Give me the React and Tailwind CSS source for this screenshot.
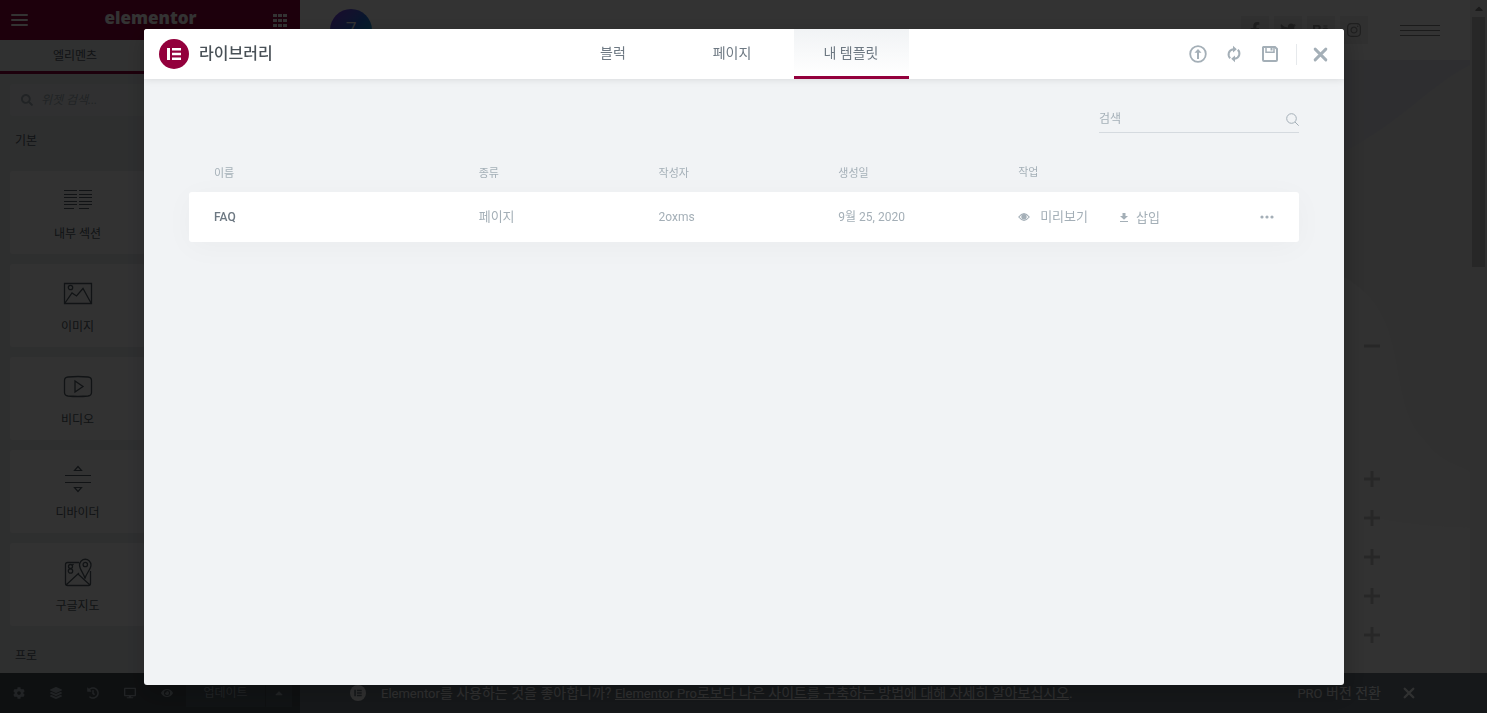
import {
  FaBehance,
  FaCaretUp,
  FaCog,
  FaDesktop,
  FaEye,
  FaFacebookF,
  FaHistory,
  FaInstagram,
  FaLayerGroup,
  FaSearch,
  FaTwitter,
} from "react-icons/fa";

const widgets = [
  { name: "내부 섹션", Icon: InnerSectionIcon },
  { name: "이미지", Icon: ImageIcon },
  { name: "비디오", Icon: VideoIcon },
  { name: "디바이더", Icon: DividerIcon },
  { name: "구글지도", Icon: MapIcon },
];

const socials = [
  { name: "Facebook", Icon: FaFacebookF },
  { name: "Twitter", Icon: FaTwitter },
  { name: "Behance", Icon: FaBehance },
  { name: "Instagram", Icon: FaInstagram },
];

const panelTools = [
  { name: "설정", Icon: FaCog },
  { name: "내비게이터", Icon: FaLayerGroup },
  { name: "히스토리", Icon: FaHistory },
  { name: "반응형 모드", Icon: FaDesktop },
  { name: "미리보기", Icon: FaEye },
];

const tabs = ["블럭", "페이지", "내 템플릿"];

const templates = [
  { title: "FAQ", type: "페이지", author: "2oxms", date: "9월 25, 2020" },
];

function InnerSectionIcon() {
  return (
    <svg width="30" height="30" fill="none" stroke="currentColor">
      <path d="M1 5.5h13M1 9.5h13M1 12.5h13M1 16.5h13M1 19.5h13M1 23.5h10M16 5.5h13M16 9.5h13M16 12.5h13M16 16.5h13M16 19.5h13M16 23.5h10" />
    </svg>
  );
}

function ImageIcon() {
  return (
    <svg width="30" height="30" fill="none" stroke="currentColor" strokeWidth="1.3">
      <path d="M1.5 5.5h27v20h-27zM2 25l7-10 4.5 3L20 10.500 28 25" />
      <circle cx="7.5" cy="9.5" r="2.2" />
    </svg>
  );
}

function VideoIcon() {
  return (
    <svg width="30" height="30" fill="none" stroke="currentColor" strokeWidth="1.3">
      <path d="M5 6q10-1 20 0 3.500.3 3.500 3.500v12q0 3-3.500 3.500-10 1-20 0-3.500-.5-3.500-3.500v-12Q1.500 6.300 5 6z" />
      <path d="M12 10v11l8-5.5z" />
    </svg>
  );
}

function DividerIcon() {
  return (
    <svg width="30" height="30" fill="none" stroke="currentColor" strokeWidth="1.2">
      <path d="M2 11.500h26M2 18.500h26M11.500 6.500h7L15 2.500zM11.500 23.500h7L15 27.500z" />
    </svg>
  );
}

function MapIcon() {
  return (
    <svg width="30" height="30" fill="none" stroke="currentColor" strokeWidth="1.3">
      <path d="M16 5.500H4.500q-2 0-2 2v19q0 2 2 2h21q2 0 2-2V14M3 28l13-12M15 17l12 11" />
      <path d="M22 21.500c-1-5-5.500-9-5.500-13.500a5.700 5.700 0 0 1 11.500 0c0 4.500-5 8.500-6 13.500z" />
      <circle cx="22.3" cy="7.5" r="2.2" />
      <circle cx="7.5" cy="9.5" r="2" />
      <circle cx="7.5" cy="14" r="2.2" />
      <path d="M9 8.500 10.500 7" />
    </svg>
  );
}

function MenuIcon() {
  return (
    <svg width="17" height="12" stroke="currentColor" strokeWidth="2" strokeLinecap="round">
      <path d="M1 1h15M1 6h15M1 11h15" />
    </svg>
  );
}

function GridIcon() {
  return (
    <svg width="14" height="13" fill="currentColor">
      <path d="M0 0h4v3H0zM5 0h4v3H5zM10 0h4v3h-4zM0 5h4v3H0zM5 5h4v3H5zM10 5h4v3h-4zM0 10h4v3H0zM5 10h4v3H5zM10 10h4v3h-4z" />
    </svg>
  );
}

function ElementorMark({ className }) {
  return (
    <svg viewBox="0 0 30 30" className={className}>
      <circle cx="15" cy="15" r="15" className="fill-current" />
      <path
        d="M8 9h3v12H8zM13 9h9v2.500h-9zM13 13.700h9v2.600h-9zM13 18.500h9V21h-9z"
        className="fill-[var(--mark)]"
      />
    </svg>
  );
}

function UploadIcon() {
  return (
    <svg width="18" height="18" fill="none" stroke="currentColor" strokeWidth="1.8">
      <circle cx="9" cy="9" r="7.8" />
      <path d="M9 14V5.500" strokeWidth="2" />
      <path d="M5.500 7.800 9 4l3.500 3.800z" fill="currentColor" stroke="none" />
    </svg>
  );
}

function SyncIcon() {
  return (
    <svg width="18" height="18" fill="none" stroke="currentColor" strokeWidth="2">
      <path d="M5.200 13.200C2.500 10.500 3 5 8.500 4.200M12.800 4.800c2.700 2.700 2.200 8.200-3.300 9" />
      <path d="M8 .8 11.800 4.200 8 7.600zM10 10.400 6.200 13.800 10 17.200z" fill="currentColor" stroke="none" />
    </svg>
  );
}

function SaveIcon() {
  return (
    <svg width="18" height="18" fill="none" stroke="currentColor" strokeWidth="2">
      <path d="M2.500 2h11.500l2 2v11q0 1-1 1H3q-1 0-1-1V2.500z" />
      <path d="M5 2v5.300h8V2" strokeWidth="1.5" />
      <path d="M10.500 2v3.500" />
    </svg>
  );
}

function CloseIcon({ size }) {
  return (
    <svg width={size} height={size} viewBox="0 0 14 14" fill="none" stroke="currentColor" strokeWidth="2.7">
      <path d="M2 2l10 10M12 2L2 12" strokeLinecap="round" />
    </svg>
  );
}

function SearchIcon() {
  return (
    <svg width="13" height="13" fill="none" stroke="currentColor">
      <circle cx="5.5" cy="5.5" r="4.8" />
      <path d="M9 9l3.700 3.700" />
    </svg>
  );
}

function PreviewIcon() {
  return (
    <svg width="12" height="8" viewBox="0 0 12 8" fill="none" stroke="currentColor" strokeWidth="1.2">
      <path d="M.8 4Q6-2.600 11.200 4 6 10.600.8 4z" />
      <circle cx="6" cy="3.8" r="2.7" fill="currentColor" stroke="none" />
    </svg>
  );
}

function InsertIcon() {
  return (
    <svg width="8" height="9" fill="currentColor">
      <path d="M2.500 0h3v3H8L4 6.800 0 3h2.500zM0 8h8v1H0z" />
    </svg>
  );
}

function Panel() {
  return (
    <aside className="flex w-[300px] shrink-0 flex-col bg-[#e6e9ec] text-[12px] text-[#556068]">
      <header className="flex h-10 shrink-0 items-center justify-between bg-[#93003c] pr-[13px] pl-[11px] text-white">
        <button aria-label="메뉴">
          <MenuIcon />
        </button>
        <span className="pb-1 font-['Open_Sans',sans-serif] text-[17px] leading-6 font-extrabold">
          elementor
        </span>
        <button aria-label="위젯 패널">
          <GridIcon />
        </button>
      </header>
      <div className="flex h-[34px] shrink-0 bg-[#f1f3f5]">
        <button className="w-1/2 border-b-[3px] border-[#93003c]">엘리멘츠</button>
      </div>
      <label className="mx-2.5 mt-2.5 flex h-8 shrink-0 items-center gap-2 rounded-[3px] bg-[#eff1f3] px-[11px]">
        <FaSearch className="size-3 shrink-0 text-[#a4afb7]" />
        <input
          type="search"
          aria-label="위젯 검색"
          placeholder="위젯 검색..."
          className="w-full italic placeholder:text-[#a4afb7]"
        />
      </label>
      <div className="flex-1 overflow-hidden">
        <h3 className="px-[15px] pt-[17px] pb-[22px] leading-4">기본</h3>
        <div className="grid grid-cols-2 gap-2.5 px-2.5">
          {widgets.map(({ name, Icon }) => (
            <div key={name} className="contents">
              <button className="flex h-[83px] flex-col items-center rounded-[3px] bg-[#f9fafb] pt-3.5">
                <Icon />
                <span className="pt-[11px] leading-4">{name}</span>
              </button>
              <div className="rounded-[3px] bg-[#f9fafb]" />
            </div>
          ))}
        </div>
        <h3 className="px-[15px] pt-[22px] leading-4">프로</h3>
      </div>
      <footer className="flex h-10 shrink-0 items-center bg-[#495157] text-[#a4afb7]">
        {panelTools.map(({ name, Icon }) => (
          <button key={name} aria-label={name} className="flex w-[37px] justify-center">
            <Icon className="h-3 w-3" />
          </button>
        ))}
        <button className="ml-px h-7 w-[79px] bg-[#556068]">업데이트</button>
        <button aria-label="저장 옵션" className="ml-px flex h-7 w-[26px] items-center justify-center bg-[#556068]">
          <FaCaretUp className="h-3 w-3" />
        </button>
      </footer>
    </aside>
  );
}

function Toggle({ open }) {
  return (
    <button aria-label={open ? "접기" : "펼치기"} className="flex size-4 items-center justify-center">
      <svg width="16" height="16" stroke="currentColor" strokeWidth="3">
        <path d={open ? "M0 8h16" : "M0 8h16M8 0v16"} />
      </svg>
    </button>
  );
}

function Preview() {
  return (
    <main className="relative flex min-w-0 flex-1 flex-col overflow-hidden bg-[#efefef] text-[#c4c4c4]">
      <svg
        className="absolute right-0 top-[60px] h-[613px] w-[126px]"
        viewBox="0 0 126 613"
        preserveAspectRatio="none"
      >
        <path d="M0 0h126v5C80 30 60 60 0 92z" fill="#e7e7f0" />
        <path d="M0 217C70 255 40 340 80 380 100 405 110 402 126 412V613H0z" fill="#f6f6f6" />
        <path d="M0 451q60 16 126 17v145H0z" fill="#fafafa" />
      </svg>
      <header className="relative flex h-[60px] shrink-0 items-center justify-between bg-white px-[30px]">
        <div className="flex size-[42px] items-center justify-center rounded-full bg-linear-to-br from-[#7a2be0] via-[#2a6fe0] to-[#0fc0c8] font-['Inter',sans-serif] text-xl font-light text-white">
          7
        </div>
        <nav className="flex items-center">
          {socials.map(({ name, Icon }) => (
            <a
              key={name}
              href="#"
              aria-label={name}
              className="mr-[5px] flex size-7 items-center justify-center bg-[#efefef] text-[#999]"
            >
              <Icon className="size-4" />
            </a>
          ))}
          <button aria-label="메뉴 열기" className="ml-[27px] flex w-10 flex-col gap-1">
            <span className="h-px w-full bg-[#888]" />
            <span className="h-px w-full bg-[#888]" />
            <span className="h-px w-full bg-[#888]" />
          </button>
        </nav>
      </header>
      <div className="relative flex flex-1 flex-col items-end pt-[278px] pr-[90px]">
        <Toggle open />
        <div className="flex flex-col gap-[23px] pt-[117px]">
          <Toggle />
          <Toggle />
          <Toggle />
          <Toggle />
          <Toggle />
        </div>
      </div>
    </main>
  );
}

function Scrollbar() {
  return (
    <div className="flex w-[17px] shrink-0 flex-col items-center bg-[#f1f1f1] text-[#888]">
      <FaCaretUp className="my-0.5 h-[13px] w-3" />
      <div className="h-[250px] w-[13px] bg-[#c1c1c1]" />
    </div>
  );
}

function ProBar() {
  return (
    <div className="flex h-10 shrink-0 items-center bg-[#6d7882] pr-[72px] pl-[50px] text-sm text-[#f1f3f5]">
      <ElementorMark className="size-4 text-[#f1f3f5] [--mark:#6d7882]" />
      <p className="ml-[15px] flex-1 truncate">
        <span className="text-[13px]">Elementor</span>를 사용하는 것을 좋아합니까?{" "}
        <a href="#" className="underline">
          <span className="text-[13px]">Elementor Pro</span>로보다 나은 사이트를 구축하는 방법에 대해 자세히
          알아보십시오
        </a>
        .
      </p>
      <a href="#">
        <span className="text-[13px]">PRO</span> 버전 전환
      </a>
      <button aria-label="닫기" className="ml-[22px]">
        <CloseIcon size={12} />
      </button>
    </div>
  );
}

function LibraryHeader() {
  return (
    <header className="relative grid h-[50px] shrink-0 grid-cols-[1fr_auto_1fr] bg-white shadow-[0_0_8px_rgba(0,0,0,0.12)]">
      <div className="flex items-center gap-2.5 pl-[15px]">
        <ElementorMark className="size-[30px] text-[#93003c] [--mark:#ffffff]" />
        <h1 className="text-base font-medium text-[#495157]">라이브러리</h1>
      </div>
      <div role="tablist" className="flex gap-1 pr-6 text-sm text-[#6d7882]">
        {tabs.map((tab) => (
          <button
            key={tab}
            role="tab"
            aria-selected={tab === "내 템플릿"}
            className="w-[115px] border-b-[3px] border-transparent aria-selected:border-[#93003c] aria-selected:bg-linear-to-b aria-selected:from-[#f1f3f5] aria-selected:to-white"
          >
            {tab}
          </button>
        ))}
      </div>
      <div className="flex items-center justify-end pr-4 text-[#a4afb7]">
        <div className="flex gap-[18px] pr-[17px]">
          <button aria-label="템플릿 가져오기">
            <UploadIcon />
          </button>
          <button aria-label="라이브러리 동기화">
            <SyncIcon />
          </button>
          <button aria-label="저장">
            <SaveIcon />
          </button>
        </div>
        <button aria-label="닫기" className="border-l border-[#e6e9ec] py-[3px] pl-4">
          <CloseIcon size={15} />
        </button>
      </div>
    </header>
  );
}

function TemplateTable() {
  return (
    <table className="w-full table-fixed text-left text-[12px] text-[#a4afb7]">
      <thead className="text-[11px]">
        <tr className="h-10">
          <th className="w-[26.1%] pt-1 pl-[25px] font-normal">이름</th>
          <th className="w-[16.2%] pt-1 font-normal">종류</th>
          <th className="w-[16.2%] pt-1 font-normal">작성자</th>
          <th className="w-[16.2%] pt-1 font-normal">생성일</th>
          <th className="pt-0.5 font-normal">작업</th>
        </tr>
      </thead>
      <tbody>
        {templates.map((template) => (
          <tr
            key={template.title}
            className="h-[50px] rounded-[3px] bg-white shadow-[0_5px_30px_rgba(0,0,0,0.03)]"
          >
            <td className="rounded-l-[3px] pl-[25px] font-medium text-[#6d7882]">{template.title}</td>
            <td className="text-[13px]">{template.type}</td>
            <td>{template.author}</td>
            <td>{template.date}</td>
            <td className="rounded-r-[3px] pr-[25px] text-[13px]">
              <div className="flex items-center">
                <button className="flex items-center gap-2.5">
                  <PreviewIcon />
                  미리보기
                </button>
                <button className="ml-8 flex items-center gap-2 pt-px">
                  <InsertIcon />
                  삽입
                </button>
                <button aria-label="더 보기" className="ml-auto">
                  <svg width="14" height="4" fill="currentColor">
                    <circle cx="2" cy="2" r="1.6" />
                    <circle cx="7" cy="2" r="1.6" />
                    <circle cx="12" cy="2" r="1.6" />
                  </svg>
                </button>
              </div>
            </td>
          </tr>
        ))}
      </tbody>
    </table>
  );
}

function LibraryModal() {
  return (
    <div className="fixed inset-0 flex justify-center bg-black/80 pt-[29px] pb-7 pl-px">
      <div
        role="dialog"
        aria-label="라이브러리"
        className="flex w-[95%] max-w-[1200px] flex-col overflow-hidden rounded-[3px] bg-[#f1f3f5] shadow-[2px_8px_23px_3px_rgba(0,0,0,0.2)]"
      >
        <LibraryHeader />
        <div className="flex flex-1 flex-col px-[45px] pt-[27px]">
          <label className="mb-[19px] flex h-[27px] w-[200px] items-center self-end border-b border-[#d5dadf] text-[#a4afb7]">
            <input
              type="text"
              aria-label="검색"
              placeholder="검색"
              className="min-w-0 flex-1 text-[12px] placeholder:text-[#a4afb7]"
            />
            <SearchIcon />
          </label>
          <TemplateTable />
        </div>
      </div>
    </div>
  );
}

const App = () => {
  return (
    <div className="font-[Roboto,'Noto_Sans_CJK_KR',sans-serif]">
      <div className="flex h-screen overflow-hidden">
        <Panel />
        <div className="flex min-w-0 flex-1 flex-col">
          <div className="flex min-h-0 flex-1">
            <Preview />
            <Scrollbar />
          </div>
          <ProBar />
        </div>
      </div>
      <LibraryModal />
    </div>
  );
};

export default App;
